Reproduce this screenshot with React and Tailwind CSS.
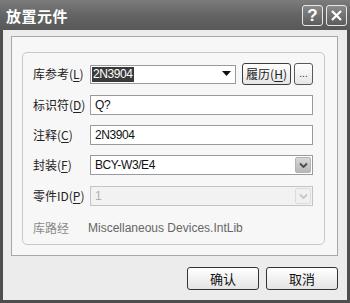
export default function App() {
  const cjk = { fontFamily: '"Noto Sans CJK SC", "Noto Sans", sans-serif' };
  const lat = { fontFamily: '"Liberation Sans", "Noto Sans CJK SC", sans-serif' };
  const Label = ({ children, dim }) => (
    <div className={`w-[57px] shrink-0 text-[12px] leading-none ${dim ? "text-[#8a8a8a]" : "text-[#222]"}`} style={cjk}>
      {children}
    </div>
  );
  const Acc = ({ c }) => <span className="underline underline-offset-2">{c}</span>;
  const DropBtn = ({ dim }) => (
    <div className={`w-[16px] h-[16px] mr-[1px] flex items-center justify-center rounded-[2px] border ${dim ? "border-[#dcdcdc] bg-[#f0f0f0]" : "border-[#b4b4b4] bg-gradient-to-b from-[#d8d8d8] to-[#b8b8b8]"}`}>
      <svg width="9" height="7" viewBox="0 0 9 7">
        <path d="M1 1.5 L4.5 5 L8 1.5" fill="none" stroke={dim ? "#c8c8c8" : "#4a4a4a"} strokeWidth="1.8" />
      </svg>
    </div>
  );
  return (
    <div className="w-[350px] h-[303px] flex flex-col bg-[#4e4e4e] overflow-hidden">
      <div className="h-[30px] shrink-0 flex items-center justify-between pl-[6px] pr-[3px] bg-gradient-to-b from-[#7c7c7c] via-[#646464] to-[#585858]">
        <div className="text-white text-[15px] font-bold leading-none tracking-[0.5px]" style={cjk}>放置元件</div>
        <div className="flex gap-[3px] mt-[1px]">
          <div className="w-[21px] h-[21px] rounded-[3px] border border-[#e8e8e8] bg-gradient-to-b from-[#8a8a8a] to-[#5c5c5c] flex items-center justify-center text-white text-[17px] font-bold leading-none" style={lat}>?</div>
          <div className="w-[21px] h-[21px] rounded-[3px] border border-[#e8e8e8] bg-gradient-to-b from-[#8a8a8a] to-[#5c5c5c] flex items-center justify-center">
            <svg width="13" height="13" viewBox="0 0 13 13">
              <path d="M2 2 L11 11 M11 2 L2 11" stroke="#fff" strokeWidth="2.2" />
            </svg>
          </div>
        </div>
      </div>
      <div className="flex-1 mx-[3px] mb-[3px] bg-[#ececec] flex flex-col pt-[6px] pl-[8px] pr-[9px]">
        <div className="h-[220px] border border-[#a8a8a8] bg-[#f7f7f7] pt-[15px] pl-[10px] pr-[12px]">
          <div className="h-[193px] rounded-[5px] border border-[#c8c8c8] pl-[10px] pt-[10px] flex flex-col">
            <div className="flex items-center h-[22px]">
              <Label>库参考(<Acc c="L" />)</Label>
              <div className="w-[146px] h-[19px] border border-[#9a9a9a] bg-white flex items-center pl-[1px] justify-between">
                <span className="bg-[#3a3a3a] text-white text-[12px] leading-[15px] px-[1px] tracking-[-0.4px]" style={lat}>2N3904</span>
                <svg width="9" height="6" viewBox="0 0 9 6" className="mr-[4px]"><path d="M0 0 H9 L4.5 5 Z" fill="#111" /></svg>
              </div>
              <div className="ml-[6px] w-[49px] h-[22px] rounded-[3px] border border-[#3c3c3c] bg-gradient-to-b from-white to-[#e6e6e6] flex items-center justify-center text-[12px] text-[#222] leading-none" style={cjk}>
                履历(<Acc c="H" />)
              </div>
              <div className="ml-[3px] w-[19px] h-[22px] rounded-[3px] border border-[#5a5a5a] bg-gradient-to-b from-white to-[#e6e6e6] flex items-end justify-center pb-[5px] text-[10px] text-[#333] leading-none" style={lat}>...</div>
            </div>
            <div className="flex items-center h-[20px] mt-[10px]">
              <Label>标识符(<Acc c="D" />)</Label>
              <div className="w-[223px] h-[20px] border border-[#9a9a9a] bg-white flex items-center pl-[4px] text-[12px] text-[#111] tracking-[-0.3px]" style={lat}>Q?</div>
            </div>
            <div className="flex items-center h-[20px] mt-[10px]">
              <Label>注释(<Acc c="C" />)</Label>
              <div className="w-[223px] h-[20px] border border-[#9a9a9a] bg-white flex items-center pl-[4px] text-[12px] text-[#111] tracking-[-0.4px]" style={lat}>2N3904</div>
            </div>
            <div className="flex items-center h-[20px] mt-[10px]">
              <Label>封装(<Acc c="F" />)</Label>
              <div className="w-[223px] h-[20px] border border-[#9a9a9a] bg-white flex items-center justify-between pl-[4px] text-[12px] text-[#111] tracking-[-0.4px]" style={lat}>
                <span>BCY-W3/E4</span>
                <DropBtn />
              </div>
            </div>
            <div className="flex items-center h-[20px] mt-[11px]">
              <Label>零件ID(<Acc c="P" />)</Label>
              <div className="w-[223px] h-[20px] border border-[#c4c4c4] bg-[#f2f2f2] flex items-center justify-between pl-[4px] text-[12px] text-[#b0b0b0]" style={lat}>
                <span>1</span>
                <DropBtn dim />
              </div>
            </div>
            <div className="flex items-center h-[20px] mt-[12px]">
              <Label dim>库路经</Label>
              <div className="text-[12px] text-[#666] -ml-[2px]" style={lat}>Miscellaneous Devices.IntLib</div>
            </div>
          </div>
        </div>
        <div className="flex justify-end gap-[7px] mt-[11px]">
          <div className="w-[72px] h-[23px] rounded-[3px] border border-[#333] bg-gradient-to-b from-white to-[#e4e4e4] flex items-center justify-center text-[13px] text-[#111] leading-none" style={cjk}>确认</div>
          <div className="w-[72px] h-[23px] rounded-[3px] border border-[#333] bg-gradient-to-b from-white to-[#e4e4e4] flex items-center justify-center text-[13px] text-[#111] leading-none" style={cjk}>取消</div>
        </div>
      </div>
    </div>
  );
}
